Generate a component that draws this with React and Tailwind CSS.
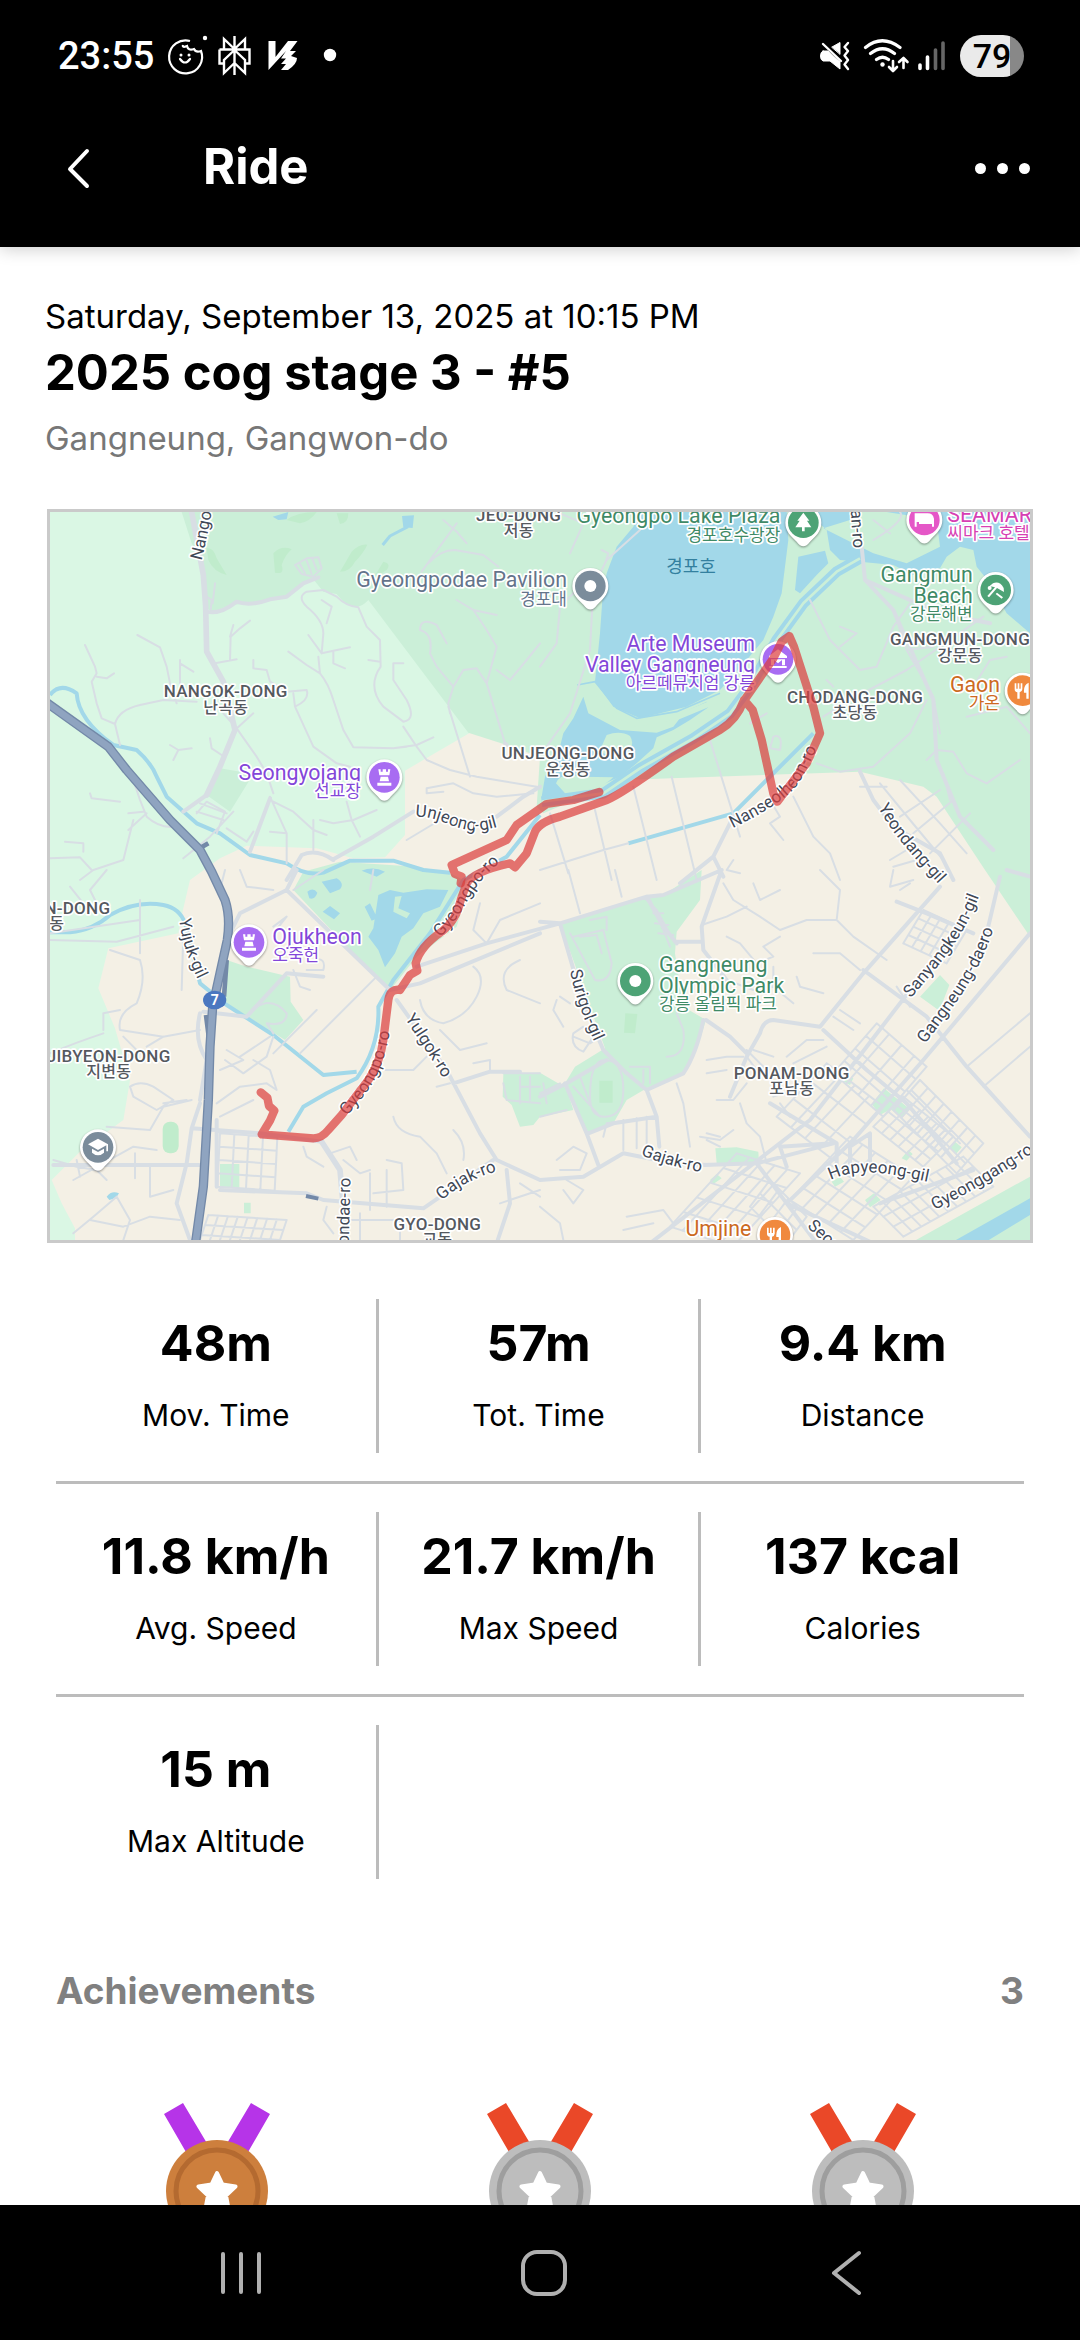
import { useId } from "react";

const STATS = [
  [
    { value: "48m", label: "Mov. Time" },
    { value: "57m", label: "Tot. Time" },
    { value: "9.4 km", label: "Distance" },
  ],
  [
    { value: "11.8 km/h", label: "Avg. Speed" },
    { value: "21.7 km/h", label: "Max Speed" },
    { value: "137 kcal", label: "Calories" },
  ],
  [{ value: "15 m", label: "Max Altitude" }],
];

const MEDALS = [
  { ribbon: "#b634e8", face: "#cd7f3d", ring: "#b46a30" },
  { ribbon: "#ea4828", face: "#bdbdbd", ring: "#9e9e9e" },
  { ribbon: "#ea4828", face: "#bdbdbd", ring: "#9e9e9e" },
];

// ================= MAP DATA =================
// a street mesh: n lines along v, m lines along u
const mesh = (x, y, ux, uy, vx, vy, n, m) => {
  let d = "";
  for (let i = 0; i <= n; i++) {
    const a = i / n;
    d += `M${x + ux * a} ${y + uy * a}l${vx} ${vy}`;
  }
  for (let j = 0; j <= m; j++) {
    const b = j / m;
    d += `M${x + vx * b} ${y + vy * b}l${ux} ${uy}`;
  }
  return d;
};

const LIGHT_PARK =
  "M30 36H1000L1290 698 1095 812V1005L1035 1072 940 1075 830 1045 620 1037 540 1075 450 1140 430 1225 415 1300 205 1345 175 1465 225 1585 270 1740 250 1860 120 1955 35 2040 65 2110 105 2185V2230H30Z";

const PARKS = [
  "M425 36L455 130 490 205 495 320 520 340Q560 310 620 312 700 300 740 290 780 255 820 238L850 275 890 282Q940 350 985 300L1285 698 1400 735 1500 770 1490 920 1510 940 1745 840 2460 815 2650 860 2690 890 2835 1110 2970 1310V36Z",
  "M760 1170L790 1115 900 1085 1130 1100 1230 1120 1290 1150 1250 1280 1130 1370 1055 1465 1030 1455Z",
  "M560 1380L620 1400 750 1430 752 1505 790 1560 735 1620 560 1510 548 1440Z",
  "M540 805L640 822 570 935 500 885Z",
  "M540 1992H598V2064H540Z",
  "M612 2108H632V2140H612Z",
  "M1390 1722L1500 1718 1580 1765 1600 1830 1500 1850 1480 1875 1440 1880 1415 1815 1388 1790Z",
  "M1560 1270L1820 1190 1870 1185 1985 1110 1980 1200 1910 1295 1905 1360 1930 1520 1998 1560 1970 1650 1930 1720 1820 1765 1760 1800 1720 1870 1645 1900 1575 1750 1605 1700 1695 1645Z",
  "M2026 1945L2090 1942 2155 1955 2157 1988 2030 1990Z",
  "M2640 1490L2700 1425 2728 1455 2698 1532Z",
  "M2495 1812L2532 1765 2610 1828 2585 1855 2552 1828 2520 1845Z",
  "M2730 1945L2745 1925 2765 1942 2750 1960Z",
  "M2585 1975L2605 1950 2618 1962 2600 1982Z",
  "M2475 2100L2502 2080 2522 2100 2490 2122Z",
  "M2375 2045L2400 2030 2412 2045 2385 2060Z",
  "M2010 2040L2030 2022 2045 2035 2020 2052Z",
  "M2420 1730L2440 1735 2430 1755 2412 1745Z",
  "M2610 2230L2970 2030V2230Z",
];

const GROVES = [
  "M500 145Q520 140 530 175L560 225Q520 215 505 180Z",
  "M700 160Q725 135 755 148 735 165 725 195 735 225 705 218Z",
  "M935 155Q960 130 982 134 970 160 945 185 930 215 900 215Z",
  "M1030 185Q1055 190 1040 210L1000 235Z",
  "M740 60Q770 36 830 36 810 65 780 70Z",
  "M890 40H925Q925 70 900 72Z",
  "M1756 1540L1792 1542 1785 1600 1752 1598Z",
  "M1678 1742H1718V1808H1678Z",
];

const LAKES = [
  "M1780 80L1800 36H2240L2245 120 2235 200 2225 280 2200 350 2170 420 2120 480 2040 570 1940 620 1800 655 1720 620 1665 545 1680 400 1687 300 1700 220 1730 140Z",
  "M1630 590L1645 640 1740 690 1850 698 1900 680 1935 635 2000 605Q2020 615 1990 632L1950 660 1900 690 1850 712 1840 745 1790 790 1740 830 1650 870 1530 895 1505 890 1515 830 1560 740 1570 700 1600 655Z",
  "M2275 170L2355 152 2365 190 2330 225 2280 280 2265 270Z",
  "M2350 85L2430 60 2440 36H2300L2360 90 2370 150 2400 180 2460 185 2560 195 2620 225 2700 205 2720 170 2760 140 2800 150 2810 200 2850 250 2900 340 2970 400V36H2540L2690 60 2700 140 2600 190 2500 160 2420 120Z",
  "M698 50L745 36 740 58 715 60Z",
  "M1086 48L1122 46 1118 84 1090 82Z",
  "M845 1145L890 1135Q915 1150 900 1168L870 1180Z",
  "M848 1235L870 1218 900 1240 882 1258Z",
  "M802 1175Q820 1160 832 1178 825 1200 808 1195Z",
  "M965 1112Q1000 1098 1035 1115L1010 1130Z",
  "M1015 1185L1050 1170 1090 1178 1160 1168 1225 1170 1200 1220 1150 1240 1120 1285 1085 1310 1065 1360 1035 1402 1015 1350 985 1310 1000 1285Z",
  "M974 1220L990 1210 1012 1255 995 1262Z",
  "M200 2090Q215 2070 237 2080 230 2095 208 2100Z",
  "M2730 2230L2970 2095V2145L2830 2230Z",
];

const ISLANDS = [
  "M1700 705Q1740 690 1770 708 1790 740 1750 765 1700 775 1680 750Z",
  "M1548 850Q1560 815 1620 830L1720 832Q1670 880 1580 885Z",
  "M1065 1190L1085 1188 1075 1225 1110 1240 1100 1255 1060 1235Z",
];

const STREAMS = [
  "M30 585Q60 545 110 580 115 660 220 735L290 750Q335 790 350 830L380 890 470 970 540 1000 630 1065 740 1090Q800 1130 850 1118L930 1082H1060L1150 1110 1230 1118",
  "M30 1297H90Q160 1290 210 1245 290 1200 370 1215 420 1225 435 1270L480 1450 560 1515 700 1605 850 1725 950 1715",
  "M745 1895L790 1820 860 1780 950 1735Q1020 1640 1015 1520L1060 1440 1170 1300 1270 1140 1400 1070 1500 945",
  "M1765 1030L2080 940 2320 700",
];

const RIVER = "M1505 905L1690 880 1800 805 1960 715 2070 640 2130 560 2210 420 2290 310 2390 215 2460 175";

// side streets, one string for each quarter of the map
const STREETS = [
  {
    x: 0,
    y: 0,
    d: "M135 435L165 500 170 520 155 545 170 610 185 655 225 672 240 735M170 530L200 535 222 520M225 672Q235 630 300 615L370 600 470 605M292 405L360 442 380 500 392 560 410 610M420 480V560M420 490L460 515M525 490L590 478M570 480L572 410 600 385 630 362M570 410L580 375M745 455L800 495 840 520Q865 550 880 600L910 690 940 742 1060 745 1130 735 1180 712M805 405L845 460 850 400Q850 360 800 320 770 290 800 275L850 270 890 290Q920 320 955 322L980 380 1020 420 1022 500Q980 560 1030 620L1090 665Q1130 660 1100 600L1060 540V490H1090M845 460L930 442M880 455V490L915 505M840 520L835 470M845 300L875 320 860 370M640 480V505L680 510 690 545 740 575 800 570Q810 600 765 620L820 740 890 790 930 800M765 620L760 580M550 640L590 685 650 770 680 820 700 880M585 690L640 640M510 715L515 745 545 765M390 735L415 750 400 780M415 750L455 745M150 880L155 895 240 905M275 825L300 900 320 950Q360 985 400 980M265 990L320 940M265 940L310 935M120 1140L160 1110 250 1080 280 960M75 1025L130 1030V1055M30 1075L120 1072 155 1110M430 1075L510 1010 580 935M470 935L550 960M480 910L560 940M690 890L740 1000V1090M700 905L760 935 820 990 860 1005M820 960V1050M740 1000L690 995M920 905L935 960 960 1010M840 960L880 970 940 960 1010 930M1100 1020L1200 960M1090 680L1130 740 1160 780 1230 810 1310 830 1400 845 1490 860M1230 640L1225 610 1240 560 1270 510 1310 505 1340 550 1395 730M1225 620L1290 830M1240 560L1190 500 1170 460Q1180 400 1140 390 1140 350 1190 375L1220 430M1340 550L1370 440 1340 390 1300 330 1370 345M1370 510L1410 540 1460 480 1500 430M1300 330L1250 300M1165 190Q1200 150 1245 150L1330 165 1375 200M1250 95L1280 130M1160 865L1240 850 1300 880 1370 890 1480 880M1160 865V880L1210 875M985 480L1020 485M1060 745L1100 740M765 195L800 175 835 172 845 205 820 230 785 222ZM780 192L795 220M800 182L815 222M818 178L830 210M500 290L515 300 512 330M525 250L518 310M1250 70L1170 180 1145 215M1250 95L1210 60M470 940L500 905 555 935 530 1000M560 985L620 1025 640 995",
  },
  {
    x: 1500,
    y: 0,
    d: "M30 940L85 1120M165 930L215 1140M280 860L350 1140M395 830L470 1140M510 720L600 1010M0 1110L190 1050 265 1030M300 90L200 180 160 260 150 450 90 640 20 740M185 150L205 160 195 190M0 500L50 430 60 320 110 270M60 40L130 70 90 160M810 300L870 420 960 510 1010 500 1060 380 1110 310M900 380L950 400 900 440M860 540L880 560M850 650L930 600 1100 510 1330 350M1000 120Q1100 60 1080 36M1000 60L1050 100M1060 330L1100 450 1180 590 1200 700M1100 450L1180 440M830 790L900 815 1000 800 1110 700 1160 600M1160 780L1190 750 1240 755 1280 820 1340 850M1300 560L1350 480 1400 470M1280 650L1400 620 1470 700M1340 850L1440 780M760 890L820 1010 870 1060 900 1140M690 900L720 950 690 970 730 1020M580 1080L560 1110 600 1120M1040 860L960 860M1080 950L1200 870M1120 1000L1240 900M1170 1060L1290 940M1020 850L1110 960 1210 1080M1080 840L1200 970 1280 1060M700 710Q730 700 720 750L690 745ZM630 670L680 640M1210 820L1230 900M1050 1080L1100 1050M1060 1100L1130 1080",
  },
  {
    x: 0,
    y: 1110,
    d: "M30 210L230 215 400 170M30 190L300 150M180 120L150 60 200 0M130 100L90 50M300 90V250M210 240L300 270Q320 330 290 400 230 430 240 480L370 500 480 480M370 500L320 530M190 480V430L240 420M250 500L300 550 340 550M30 550Q100 520 190 490M555 0L540 60M600 0L620 50 700 60M850 0L760 60M430 190L425 360M560 540L610 570 540 600M690 500L600 560M555 570L610 610 680 560 700 500M530 700L600 650 680 640 710 660 690 600 640 570M540 740L640 690M270 650Q300 630 340 650L400 690 350 720 280 680ZM370 700L440 690M455 690L370 710 330 780 200 770M700 170L740 140 700 190M760 300L780 350 810 360M820 270Q860 260 850 300L800 300M650 410Q700 380 740 430 740 470 680 460L700 490M780 550L1010 320M830 420L700 550M1140 390Q1150 450 1210 460 1280 440 1310 380 1340 320 1300 290M1200 480L1260 540 1340 520M1030 600L1120 600 1160 560M1190 650L1230 640M1060 740Q1070 790 1140 800L1190 850 1220 910M1240 780Q1280 820 1270 870M1440 270Q1370 300 1400 360L1500 400M1340 220L1380 150 1500 100M1340 220L1300 180 1320 100M910 870L960 910 990 900M870 850L930 830 950 870M790 830L800 860 850 890M990 910V1020M1000 970L1090 960 1085 880 1040 870M1040 1010V900M1350 600V570L1300 580M860 1010L850 1050 880 1090M930 1050H1080V1110M960 1030V1110M100 930L280 830 350 840M285 850V925M330 890V980L400 960M100 1090L160 1040 230 980 270 1050 250 1110M150 1050L250 1070 330 1040 420 1050M120 920L110 870M200 930L170 900 110 890M40 870L110 890M1380 1000L1500 960M1440 940L1500 980M990 60L1000 0M1390 610H1500M1390 640L1400 690 1500 700M1440 620V700M1470 620V690M1440 650H1500",
  },
  {
    x: 1500,
    y: 1110,
    d: "M85 0L120 130M225 0L245 80M100 200L190 180 215 280Q210 340 165 330L90 190M120 200L170 195 185 250M150 150L200 140V180M330 90L370 180 390 230M340 130H370M345 160L385 165M355 190L400 195M320 90L350 120 400 210M485 165L560 140 620 110M550 40L580 90 660 140 720 180 800 150 890 150 940 200 1040 270M890 150L900 60 840 0M640 40L660 90 720 60M720 200L670 230 700 260 650 280 600 220 560 200M820 250L900 250 960 300M560 330L640 360 700 350 760 400M770 320L780 350 850 370M700 350V290M500 570L560 560 610 560M560 600L500 610M530 690L580 690 620 640M410 640L430 700 450 830M600 700L620 760 660 800 680 880M540 800L500 790M580 780L540 810 480 800M500 810L540 830M0 670L60 640M100 500L150 520 180 500M20 700L10 640M100 490Q90 530 130 545L160 500 130 470ZM50 390L40 420 70 470M60 380L90 400M380 560Q440 560 430 480L410 430M190 800L200 760 350 740M250 750V840M290 745V835M320 740V840M150 680Q150 570 195 570 250 570 250 660 250 740 195 740 150 740 150 680M100 650L180 740M120 620L150 700M0 740L80 720M50 870L100 830 140 850 120 900 60 900M80 930L130 960 100 1000 70 960M0 1010L60 1060 70 1110M260 1040L370 1020 400 1060M250 1080L340 1060M270 590H330V640M310 600V640M640 540L700 560M650 600L620 560M620 540L680 600M740 560L800 510 850 510M760 580L860 530M880 440L940 480M900 420L960 460M1070 350L1110 410M1060 0L1050 50 1120 30M1080 60L1110 40M1280 590L1470 430M1330 650L1470 530M1100 660L1180 740 1260 820M700 680L760 660M720 700L750 740",
  },
];

// denser downtown blocks
const BLOCKS = [
  mesh(505, 2145, 235, 15, -30, 90, 8, 3),
  mesh(540, 1900, 172, 12, -8, 160, 4, 4),
  mesh(2380, 1720, 150, 130, 130, -150, 4, 4),
  mesh(2210, 1850, 170, 130, 150, -160, 4, 3),
  mesh(2250, 2100, 190, 120, 180, -190, 5, 5),
  mesh(1890, 2180, 190, 60, 200, -220, 5, 5),
  mesh(2500, 1880, 150, 120, 90, -90, 6, 4),
  mesh(2560, 1830, 190, 190, 80, -90, 8, 3),
  mesh(2500, 2120, 90, 90, 270, -150, 3, 10),
  mesh(2590, 1330, 130, 60, 60, -100, 5, 4),
  mesh(2130, 2120, 110, 110, 60, -80, 4, 2),
];

const ROADS = [
  "M880 1078L1000 1010 1120 935M740 1140L785 1065Q830 1045 880 1080M630 1055L690 895M430 935L500 885M1370 950L1450 890 1500 860M1395 730L1400 735",
  "M500 335Q540 345 590 305 630 320 690 298L740 290 790 250 835 232",
  "M2465 140L2475 240 2560 330M2475 240L2700 340 2850 370M2560 330L2680 600 2690 780 2760 950 2860 1050",
  "M2460 815L2500 900 2560 980 2700 1060 2740 1140M2080 950L2020 1070 1920 1150M2020 1070L2050 1130",
  "M740 1170L600 1240 575 1290M1050 1470L740 1170 770 1110M1050 1470L1140 1450 1500 1300M1130 1400L1340 1330 1560 1270",
  "M1070 1500L1220 1710 1320 1900 1370 1980 1500 2040 1630 2030 1750 1960 1900 1990 2000 1995M1240 1750L1350 1715 1440 1715",
  "M455 1885L660 1900 845 1925M540 2070L800 2080 850 2100 1150 2125 1360 1980M1400 2010L1410 2110 1370 2230",
  "M40 1995H480M455 1885L440 1990 410 2110 450 2220M480 1810L455 1885M530 1860V2060M480 1540Q460 1620 500 1680L480 1800M490 1535L620 1550 740 1420 850 1430",
  "M1500 1265L1560 1270 1820 1190 1870 1185 2045 1110M1560 1270L1630 1510 1690 1650 1760 1720 1820 1770 1850 1850 1858 1940",
  "M2045 1110L1985 1280 1990 1350 2060 1440M1905 1325H1985M1820 1190L1870 1280 1910 1330M1990 1560Q1970 1660 1930 1720L1820 1770M1575 1750L1640 1900 1675 1995M1645 1900L1720 1870 1850 1850M1500 1790L1580 1750 1700 1680",
  "M2700 1160L2470 1420 2340 1580 2200 1560Q2170 1560 2160 1600L2120 1670 2070 1790M1998 1560L2070 1610 2120 1660M2190 1810L2390 1930 2390 1990",
  "M1830 2230L2310 1860 2480 1640 2680 1380M2240 2110L2440 1920 2650 1680 2970 1300M2240 2110L2150 1990M2240 2110L2330 2230M2240 2110L2500 2230M1990 1995L2150 1990 2380 1930 2220 1940 2240 2000",
  "M2470 1410L2660 1550 2780 1700 2970 1910M2350 1590L2480 1710 2600 1810 2750 1990M2570 1205L2660 1240 2800 1300M2880 1130L2840 1300M2900 1110L2970 1130M2520 2110L2800 2010M2430 2000L2430 1940 2490 1900 2490 1990",
];

const MOTORWAY =
  "M20 608L205 740 260 810 390 960 480 1050 515 1115 555 1200Q572 1250 562 1320L540 1420 518 1520 510 1640 505 1800 490 2060 465 2240";

const ROUTE =
  "M662 1777L682 1793 687 1818 703 1832 690 1862 665 1903 820 1915Q845 1915 865 1890L905 1845 985 1740Q1020 1690 1030 1620L1045 1500Q1050 1465 1080 1470L1110 1425 1132 1412 1127 1390Q1140 1340 1205 1295 1250 1260 1262 1200L1280 1150Q1300 1115 1410 1090L1425 1102 1460 1060 1485 995Q1500 965 1560 950L1700 900Q1740 885 1900 770L2040 690Q2090 660 2110 605L2200 475 2225 425 2248 408 2262 440 2320 620 2340 700 2300 790 2212 905 2200 880 2165 720 2138 630 2112 600";

const ROUTE_BACK = "M1678 876L1600 900 1520 912 1430 975 1400 1020 1235 1095 1245 1122 1265 1130 1262 1150";

const DISTRICTS = [
  ["JEO-DONG", "저동", 1436, 62],
  ["NANGOK-DONG", "난곡동", 557, 592],
  ["UNJEONG-DONG", "운정동", 1584, 778],
  ["GANGMUN-DONG", "강문동", 2760, 436],
  ["CHODANG-DONG", "초당동", 2445, 608],
  ["PONAM-DONG", "포남동", 2255, 1736],
  ["JIBYEON-DONG", "지변동", 206, 1686],
  ["N-DONG", "동", 112, 1242],
  ["GYO-DONG", "교동", 1192, 2190],
];

const STREET_NAMES = [
  ["Nangok-ro", "M484 182Q504 110 534 -80"],
  ["Unjeong-gil", "M1126 950C1200 950 1230 985 1300 992Q1340 994 1420 965"],
  ["an-ro", "M2432 30L2442 170"],
  ["Nanseolheon-ro", "M2078 985Q2240 905 2275 850T2350 700"],
  ["Yeondang-gil", "M2514 922C2560 1010 2640 1090 2740 1200"],
  ["Gyeongpo-ro", "M1200 1312C1290 1230 1270 1170 1400 1070"],
  ["Gyeongpo-ro", "M920 1848C1000 1760 1030 1720 1058 1550"],
  ["Yujuk-gil", "M418 1256Q425 1350 490 1470"],
  ["Yulgok-ro", "M1094 1556Q1140 1620 1225 1760"],
  ["Gajak-ro", "M1206 2102Q1270 2040 1390 2008"],
  ["ondae-ro", "M926 2234L932 2010"],
  ["Surigol-gil", "M1590 1412Q1610 1520 1680 1660"],
  ["Gajak-ro", "M1802 1965Q1900 2005 2020 2022"],
  ["Hapyeong-gil", "M2372 2040C2470 1995 2560 2025 2710 2055"],
  ["Gyeonggang-ro", "M2684 2130Q2830 2060 3020 1930"],
  ["Sanyangkeun-gil", "M2612 1495C2720 1370 2790 1290 2840 1120"],
  ["Gangneung-daero", "M2655 1632C2770 1480 2830 1410 2880 1220"],
  ["Seongdeok-ro", "M2300 2180L2430 2300"],
];

const GREEN = "#4da376";
const PURPLE = "#a86cf2";
const SLATE = "#7b8c9b";
const ORANGE = "#f0893e";

const TOWER = "M-18 -24H-11V-17H-5V-24H5V-17H11V-24H18L15 -6H-15ZM-11 -2H11L14 12H-14ZM-21 16H21V25H-21Z";
const FORK = "M-24 -22H-19V-6H-15V-22H-10V-6H-6V-22H-1V-4Q-2 4 -9 5V24H-16V5Q-24 4 -24 -4ZM18 -24V24H11V6H4Q2 -18 18 -24Z";

const PLACES = [
  { x: 2290, y: 68, fill: GREEN, glyph: "M0 -30L18 -6H11L24 14H4V26H-4V14H-24L-11 -6H-18Z", names: ["Gyeongpo Lake Plaza"], kr: "경포호수광장", tx: 2221, ty: 70, end: true, ink: "#3f8a66" },
  { x: 2653, y: 60, fill: "#e557c7", glyph: "M-29 -20H-23V6H23V-2Q22 -12 12 -12H-2V2H-6V-12H-16V12H23V20H29V-4Q26 -20 10 -20ZM-29 -20V20H-23V-20Z", names: ["SEAMARQ"], kr: "씨마크 호텔", tx: 2722, ty: 66, ink: "#d63fb4" },
  { x: 1651, y: 258, fill: SLATE, names: ["Gyeongpodae Pavilion"], kr: "경포대", tx: 1581, ty: 262, end: true, ink: "#64748b" },
  { x: 2867, y: 270, fill: GREEN, glyph: "M-8 -20Q12 -28 24 -6L25 6 4 -6 -20 22 -25 18 -2 -8 -18 -12ZM-24 -6A6 6 0 1 0 -12 -6 6 6 0 1 0 -24 -6M4 8L22 22 18 26 0 12Z", names: ["Gangmun", "Beach"], kr: "강문해변", tx: 2798, ty: 245, end: true, ink: "#3f8a66" },
  { x: 2948, y: 572, fill: ORANGE, glyph: FORK, names: ["Gaon"], kr: "가온", tx: 2880, ty: 575, end: true, ink: "#cc6a22" },
  { x: 2214, y: 478, fill: PURPLE, glyph: "M0 -30L27 -10V-4H-27V-10ZM-21 0H21V18H12V2L0 12 -12 2V18H-21ZM-26 20H26V26H-26Z", names: ["Arte Museum", "Valley Gangneung"], kr: "아르떼뮤지엄 강릉", tx: 2145, ty: 452, end: true, ink: "#8347d9" },
  { x: 1033, y: 832, fill: PURPLE, glyph: TOWER, names: ["Seongyojang"], kr: "선교장", tx: 963, ty: 840, end: true, ink: "#8347d9" },
  { x: 627, y: 1327, fill: PURPLE, glyph: TOWER, names: ["Ojukheon"], kr: "오죽헌", tx: 697, ty: 1332, ink: "#8347d9" },
  { x: 1786, y: 1443, fill: GREEN, names: ["Gangneung", "Olympic Park"], kr: "강릉 올림픽 파크", tx: 1857, ty: 1415, ink: "#3f8a66" },
  { x: 2205, y: 2205, fill: ORANGE, glyph: FORK, names: ["Umjine"], tx: 2134, ty: 2208, end: true, ink: "#cc6a22" },
  { x: 174, y: 1942, fill: SLATE, glyph: "M0 -26L30 -9V12H25V-6L0 8 -30 -9ZM-18 4L0 14 18 4V16Q0 32 -18 16Z", names: [] },
];

// ================= MAP =================
function Place({ x, y, fill, glyph, names, kr, tx, ty, end, ink }) {
  const anchor = end ? "end" : "start";
  return (
    <g>
      <g transform={`translate(${x} ${y})`}>
        <path
          d="M-54 0A54 54 0 1 1 54 0C54 28 36 40 20 57Q0 84 -20 57C-36 40 -54 28 -54 0Z"
          fill="#fff"
          className="drop-shadow-[0_3px_3px_rgba(0,0,0,0.4)]"
        />
        <circle r="46" fill={fill} />
        {glyph ? <path d={glyph} fill="#fff" /> : <circle r="18" fill="#fff" />}
      </g>
      <g textAnchor={anchor} fill={ink} stroke="#fff" strokeWidth="10" strokeLinejoin="round" style={{ paintOrder: "stroke" }}>
        {names.map((name, i) => (
          <text key={name} x={tx} y={ty + i * 64} fontSize="64">
            {name}
          </text>
        ))}
        {kr && (
          <text x={tx} y={ty + names.length * 64 - 12} fontSize="51">
            {kr}
          </text>
        )}
      </g>
    </g>
  );
}

function RouteMap() {
  const id = useId();
  return (
    <svg
      viewBox="30 36 2940 2184"
      role="img"
      aria-label="Route map"
      className="block w-full font-[Roboto,'Noto_Sans_CJK_KR',sans-serif]"
    >
      <rect x="30" y="36" width="2940" height="2184" fill="#f4f0e5" />
      <path d={LIGHT_PARK} fill="#daf7e4" />
      <path d={PARKS.join("")} fill="#cbefd8" />
      <path d={GROVES.join("")} fill="#c0eccc" />
      <rect x="368" y="1865" width="48" height="95" rx="22" fill="#c0eccc" />

      <path d={LAKES.join("")} fill="#a2d8e9" />
      <path d={ISLANDS.join("")} fill="#cbefd8" />
      <g fill="none" strokeLinejoin="round">
        <path d={STREAMS.join("")} stroke="#a2d8e9" strokeWidth="12" />
        <path d="M1104 80L1050 108 1028 135" stroke="#a2d8e9" strokeWidth="9" />
        <path d={RIVER} stroke="#a2d8e9" strokeWidth="32" />
        <path d={RIVER} stroke="#cbefd8" strokeWidth="8" />
        <path d="M1612 555L1665 545 1730 625 1790 655 1910 635 2040 580" stroke="#a2d8e9" strokeWidth="5" />
        <path d="M1672 580L1720 640 1790 672 1915 650 2060 590" stroke="#cbefd8" strokeWidth="16" />
      </g>

      <g fill="none" stroke="#d8dee4" strokeLinecap="round" strokeLinejoin="round">
        {STREETS.map((s) => (
          <path key={`${s.x}-${s.y}`} d={s.d} transform={`translate(${s.x} ${s.y})`} strokeWidth="6" />
        ))}
        <path d={BLOCKS.join("")} strokeWidth="6" />
        <path d={ROADS.join("")} strokeWidth="12" />
        <path d="M455 36L490 225 497 320 500 455 550 545 585 690 540 800 500 885M845 1925L900 2010 920 2230" strokeWidth="17" />
      </g>

      <g fill="none" strokeLinejoin="round">
        <path d={MOTORWAY} stroke="#7389a8" strokeWidth="28" />
        <path d="M470 1050L505 1030M560 1380L552 1490M498 1545L510 1640" stroke="#7389a8" strokeWidth="14" />
        <path d={MOTORWAY} stroke="#8fa4c0" strokeWidth="20" />
        <path d="M798 2088L835 2096" stroke="#7389a8" strokeWidth="12" />
      </g>

      <ellipse cx="524" cy="1500" rx="35" ry="28" fill="#4a77c0" />
      <text x="524" y="1515" textAnchor="middle" fontSize="42" fontWeight="700" fill="#fff">
        7
      </text>

      <text x="1953" y="218" textAnchor="middle" fontSize="54" fill="#33809f">
        경포호
      </text>

      <g stroke="#fff" strokeWidth="10" strokeLinejoin="round" style={{ paintOrder: "stroke" }}>
        <g fill="#55595f" textAnchor="middle" className="font-medium tracking-wider">
          {DISTRICTS.map(([name, kr, x, y]) => (
            <g key={name}>
              <text x={x} y={y} fontSize="51">
                {name}
              </text>
              <text x={name === "N-DONG" ? 50 : x} y={y + 46} fontSize="48">
                {kr}
              </text>
            </g>
          ))}
        </g>
        <g fill="#3f4856" fontSize="51">
          {STREET_NAMES.map(([name, d], i) => (
            <g key={i}>
              <path id={`${id}-${i}`} d={d} fill="none" stroke="none" />
              <text>
                <textPath href={`#${id}-${i}`}>{name}</textPath>
              </text>
            </g>
          ))}
        </g>
      </g>

      {PLACES.map((p) => (
        <Place key={`${p.x}-${p.y}`} {...p} />
      ))}

      <g fill="none" stroke="#dc3c3c" strokeOpacity="0.7" strokeWidth="25" strokeLinecap="round" strokeLinejoin="round">
        <path d={ROUTE} />
        <path d={ROUTE_BACK} />
      </g>
    </svg>
  );
}

// ================= STATUS BAR =================
function StatusBar() {
  return (
    <div className="flex h-28 items-center justify-between pr-14 pl-[58px] font-[Roboto,sans-serif]">
      <div className="flex items-center">
        <span className="w-24 text-[38px] leading-none font-medium">23:55</span>
        <svg viewBox="165 34 180 46" className="ml-[11px] h-[46px] w-[180px]" fill="none" stroke="#fff" aria-hidden="true">
          <path d="M190 42A16.500 16.500 0 1 0 201 52Q196 54 194 50 188 52 187 47 182 49 183 46" strokeWidth="2.200" />
          <circle cx="205" cy="39" r="2.200" fill="#fff" stroke="none" />
          <path d="M180 60Q185 67 190 60" strokeWidth="2.200" strokeLinecap="round" />
          <circle cx="181" cy="56" r="1.500" fill="#fff" stroke="none" />
          <circle cx="189" cy="56" r="1.500" fill="#fff" stroke="none" />
          <path
            d="M234.500 37V76M234.500 50L224 40V50M234.500 50L245 40V50M219.500 50.500H249.500V64.500H245M219.500 50.500V64.500H224M234.500 51L224 61V74L234.500 64M234.500 51L245 61V74L234.500 64"
            strokeWidth="2.400"
          />
          <path d="M268.500 42H275.500V58L288 42H297.500L290 52H296L291 57 297 59Q297 65 288 71H281L286 65H281L286 59.500H281L286 52 268.500 71Z" fill="#fff" stroke="none" />
          <circle cx="330" cy="56" r="6.200" fill="#fff" stroke="none" />
        </svg>
      </div>

      <div className="flex items-center gap-[14px]">
        <svg viewBox="818 36 127 40" className="h-10 w-[127px]" fill="none" stroke="#fff" strokeLinecap="round" aria-hidden="true">
          <path d="M822 51H827L839 62V69L829 61H822Q819.500 60 819.500 56 819.500 52 822 51ZM831 47L839 42.500V54Z" fill="#fff" strokeWidth="1" strokeLinejoin="round" />
          <path d="M822 44L840 61" strokeWidth="2.400" />
          <path d="M847 43L843.500 47 847 51 843.500 55.500 847 60 843.500 64.500 847 69" strokeWidth="2.400" strokeLinejoin="round" />
          <path d="M864.500 47.500Q881 34 899 47.500M869.500 53.500Q881.500 44 893.500 53.500M875.500 59.500Q881.500 55 887.500 59.500" strokeWidth="3.200" />
          <circle cx="881.500" cy="64.500" r="2.200" fill="#fff" stroke="none" />
          <path d="M892 61V70M888 67L892 71 896 67M902.500 68V58M898 62L902.500 58 906.500 62" strokeWidth="2.600" strokeLinejoin="round" />
          <path d="M919 65V68.500M926.500 57V68.500" strokeWidth="3.600" />
          <path d="M934.500 50V68.500M942 43V68.500" stroke="#666" strokeWidth="3.600" />
        </svg>
        <div className="flex h-[42px] w-16 items-center justify-center rounded-full bg-linear-to-r from-[#eaeaea] from-78% to-[#888] to-78% text-[34px] leading-none font-medium text-black">
          79
        </div>
      </div>
    </div>
  );
}

function Medal({ ribbon, face, ring }) {
  return (
    <svg viewBox="0 0 106 140" className="h-[140px] w-[106px]" role="img" aria-label="Medal">
      <path d="M0 11L19 0 44 42 26 56ZM106 11L87 0 62 42 80 56Z" fill={ribbon} />
      <circle cx="53" cy="88" r="51" fill={face} />
      <circle cx="53" cy="88" r="41" fill="none" stroke={ring} strokeWidth="5" />
      <path
        d="M53 70L58.500 81.500 71.500 83.500 62 92.500 64.500 105.500 53 99.500 41.500 105.500 44 92.500 34.500 83.500 47.500 81.500Z"
        fill="#fff"
        stroke="#fff"
        strokeWidth="4"
        strokeLinejoin="round"
      />
    </svg>
  );
}

function Stat({ value, label, divider }) {
  return (
    <div className={divider ? "border-r-3 border-[#bcbcbc] pt-4 text-center" : "pt-4 text-center"}>
      <dd className="text-[50px] leading-[56px] font-bold">{value}</dd>
      <dt className="mt-[26px] text-[30px] leading-9">{label}</dt>
    </div>
  );
}

export default function App() {
  return (
    <div className="flex h-screen flex-col overflow-hidden bg-white font-[Inter,sans-serif] text-black">
      {/* HEADER */}
      <header className="relative z-10 h-[247px] shrink-0 bg-black text-white shadow-[0_2px_16px_rgba(0,0,0,0.2)]">
        <StatusBar />
        <div className="flex items-center px-[46px]">
          <button type="button" aria-label="Back" className="flex h-28 w-[157px] items-center">
            <svg viewBox="0 0 66 60" className="h-[60px] w-[66px]" fill="none" stroke="#fff" strokeWidth="4" strokeLinecap="round" strokeLinejoin="round">
              <path d="M41 13L24 31 41 48" />
            </svg>
          </button>
          <h1 className="flex-1 pb-1 text-[49px] leading-none font-bold">Ride</h1>
          <button type="button" aria-label="More" className="flex h-28 items-center gap-[11px] px-1">
            <span className="size-[11px] rounded-full bg-white"></span>
            <span className="size-[11px] rounded-full bg-white"></span>
            <span className="size-[11px] rounded-full bg-white"></span>
          </button>
        </div>
      </header>

      <main className="min-h-0 flex-1 overflow-hidden">
        {/* RIDE INFO */}
        <section className="px-[45px] pt-[49px]">
          <p className="text-[33px] leading-10">Saturday, September 13, 2025 at 10:15 PM</p>
          <h2 className="mt-[7px] text-[49px] leading-[60px] font-bold">2025 cog stage 3 - #5</h2>
          <p className="mt-[15px] text-[33px] leading-10 text-[#777]">Gangneung, Gangwon-do</p>
        </section>

        <div className="mx-[47px] mt-[51px] border-3 border-[#cacaca]">
          <RouteMap />
        </div>

        {/* STATS */}
        <dl className="mx-14 mt-7">
          {STATS.map((row, i) => (
            <div
              key={row[0].label}
              className={i < STATS.length - 1 ? "border-b-3 border-[#bcbcbc] py-7" : "py-7"}
            >
              <div className="grid h-[154px] grid-cols-3">
                {row.map((s, j) => (
                  <Stat key={s.label} {...s} divider={j < 2} />
                ))}
              </div>
            </div>
          ))}
        </dl>

        {/* ACHIEVEMENTS */}
        <section className="mx-14 mt-[60px]">
          <div className="flex items-center justify-between text-[37px] leading-[48px] font-bold text-[#808080]">
            <h3>Achievements</h3>
            <span>3</span>
          </div>
          <div className="mt-[88px] grid grid-cols-3 justify-items-center">
            {MEDALS.map((m, i) => (
              <Medal key={i} {...m} />
            ))}
          </div>
        </section>
      </main>

      {/* SYSTEM NAV */}
      <nav className="flex h-[135px] shrink-0 items-center justify-between bg-black pr-[210px] pl-[217px] text-[#b0b0b0]">
        <button type="button" aria-label="Recents">
          <svg viewBox="0 0 48 48" className="size-12" stroke="currentColor" strokeWidth="4" strokeLinecap="round">
            <path d="M6 5V43M24 5V43M42 5V43" />
          </svg>
        </button>
        <button type="button" aria-label="Home">
          <svg viewBox="0 0 48 48" className="size-12" fill="none" stroke="currentColor" strokeWidth="4">
            <rect x="3" y="3" width="42" height="42" rx="14" />
          </svg>
        </button>
        <button type="button" aria-label="Back">
          <svg viewBox="0 0 48 48" className="size-12" fill="none" stroke="currentColor" strokeWidth="4" strokeLinecap="round" strokeLinejoin="round">
            <path d="M37 4L12 24 37 44" />
          </svg>
        </button>
      </nav>
    </div>
  );
}
